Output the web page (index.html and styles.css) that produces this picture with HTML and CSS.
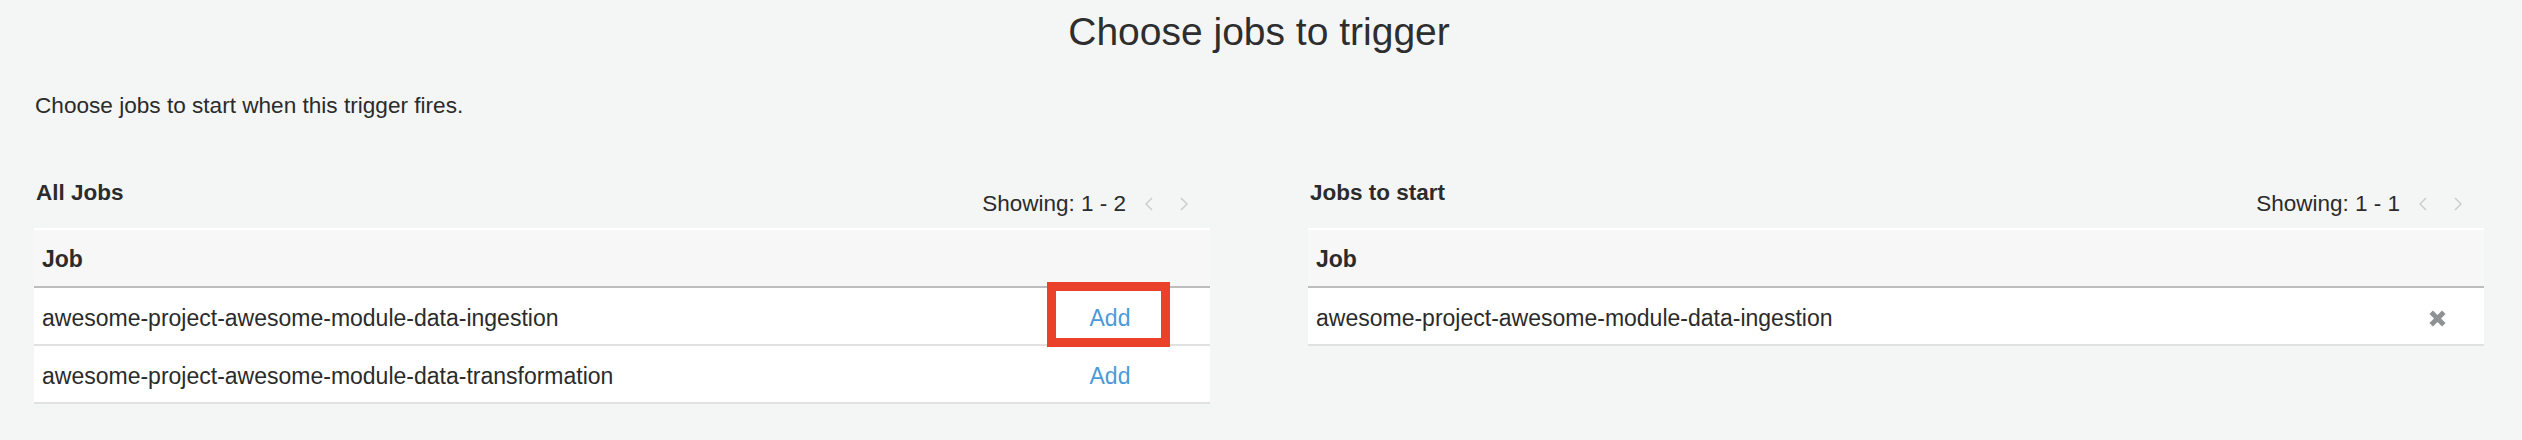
FILE: index.html
```html
<!DOCTYPE html>
<html lang="en">
<head>
<meta charset="utf-8">
<title>Choose jobs to trigger</title>
<link rel="stylesheet" href="styles.css">
</head>
<body>
<main class="page">
  <h1 class="title">Choose jobs to trigger</h1>
  <p class="intro">Choose jobs to start when this trigger fires.</p>
  <div class="panels">
    <section class="panel">
      <div class="panel-head">
        <h2 class="panel-title">All Jobs</h2>
        <div class="pager">
          <span class="pager-text">Showing: 1 - 2</span>
          <button class="pager-btn" type="button" aria-label="Previous page"><svg width="8" height="14" viewBox="0 0 8 14"><polyline points="7,1 1,7 7,13" fill="none" stroke="#cccccc" stroke-width="1.5"/></svg></button>
          <button class="pager-btn" type="button" aria-label="Next page"><svg width="8" height="14" viewBox="0 0 8 14"><polyline points="1,1 7,7 1,13" fill="none" stroke="#cccccc" stroke-width="1.5"/></svg></button>
        </div>
      </div>
      <table class="jobs">
        <thead>
          <tr><th class="col-name">Job</th><th class="col-action col-action-wide"></th></tr>
        </thead>
        <tbody>
          <tr><td class="col-name">awesome-project-awesome-module-data-ingestion</td><td class="col-action col-action-wide"><a class="link highlight" href="#">Add</a></td></tr>
          <tr><td class="col-name">awesome-project-awesome-module-data-transformation</td><td class="col-action col-action-wide"><a class="link" href="#">Add</a></td></tr>
        </tbody>
      </table>
    </section>
    <section class="panel">
      <div class="panel-head">
        <h2 class="panel-title">Jobs to start</h2>
        <div class="pager">
          <span class="pager-text">Showing: 1 - 1</span>
          <button class="pager-btn" type="button" aria-label="Previous page"><svg width="8" height="14" viewBox="0 0 8 14"><polyline points="7,1 1,7 7,13" fill="none" stroke="#cccccc" stroke-width="1.5"/></svg></button>
          <button class="pager-btn" type="button" aria-label="Next page"><svg width="8" height="14" viewBox="0 0 8 14"><polyline points="1,1 7,7 1,13" fill="none" stroke="#cccccc" stroke-width="1.5"/></svg></button>
        </div>
      </div>
      <table class="jobs">
        <thead>
          <tr><th class="col-name">Job</th><th class="col-action col-action-narrow"></th></tr>
        </thead>
        <tbody>
          <tr><td class="col-name">awesome-project-awesome-module-data-ingestion</td><td class="col-action col-action-narrow"><button class="remove" type="button" aria-label="Remove"><svg width="19" height="19" viewBox="0 0 19 19"><path d="M3.2 3.2 L15.8 15.8 M15.8 3.2 L3.2 15.8" stroke="#8f9294" stroke-width="5" fill="none"/></svg></button></td></tr>
        </tbody>
      </table>
    </section>
  </div>
</main>
</body>
</html>
```

FILE: styles.css
```css
* { box-sizing: border-box; }

html, body {
  margin: 0;
  padding: 0;
  background: #f4f6f6;
}

body {
  font-family: "Liberation Sans", Arial, Helvetica, sans-serif;
  color: #2b2b2b;
  font-size: 22.5px;
  line-height: 26px;
}

.page {
  padding: 9px 38px 0 34px;
}

.title {
  margin: 0;
  font-size: 39px;
  line-height: 46px;
  font-weight: 400;
  text-align: center;
  color: #2e2e2e;
}

.intro {
  margin: 38px 0 0 1px;
  font-size: 22.6px;
  line-height: 26px;
}

.panels {
  margin-top: 61px;
  display: grid;
  grid-template-columns: 1fr 1fr;
  column-gap: 98px;
}

.panel-head {
  display: flex;
  justify-content: space-between;
  align-items: flex-start;
  margin-bottom: 11px;
}

.panel-title {
  margin: 0 0 0 2px;
  font-size: 22.5px;
  line-height: 26px;
  font-weight: 700;
}

.pager {
  margin-top: 11px;
  display: flex;
  align-items: center;
  margin-right: 9px;
}

.pager-text {
  margin-right: 5px;
}

.pager-btn {
  width: 35px;
  height: 26px;
  padding: 0;
  border: 0;
  background: transparent;
  display: flex;
  align-items: center;
  justify-content: center;
}

.jobs {
  width: 100%;
  border-collapse: collapse;
  border-top: 2px solid #ffffff;
}

.jobs th,
.jobs td {
  padding: 17px 8px 13px;
  line-height: 26px;
  font-size: 23px;
  text-align: left;
  vertical-align: middle;
}

.jobs th {
  background: #f7f7f7;
  font-weight: 700;
  border-bottom: 2px solid #bdbdbd;
  padding-top: 16px;
  padding-bottom: 14px;
}

.jobs td {
  background: #ffffff;
  border-bottom: 2px solid #e1e1e1;
}

.jobs .col-action {
  text-align: center;
  padding-left: 0;
  padding-right: 0;
}

.col-action-wide { width: 200px; }
.col-action-narrow { width: 93px; }

.link {
  color: #4b9ad9;
  text-decoration: none;
  display: inline-block;
}

.highlight {
  position: relative;
}

.highlight::after {
  content: "";
  position: absolute;
  left: -43px;
  right: -40px;
  top: -23px;
  bottom: -16px;
  border: 9px solid #e9412a;
}

.remove {
  padding: 0;
  border: 0;
  background: transparent;
  display: inline-flex;
  vertical-align: middle;
  position: relative;
  top: -1px;
}
```
